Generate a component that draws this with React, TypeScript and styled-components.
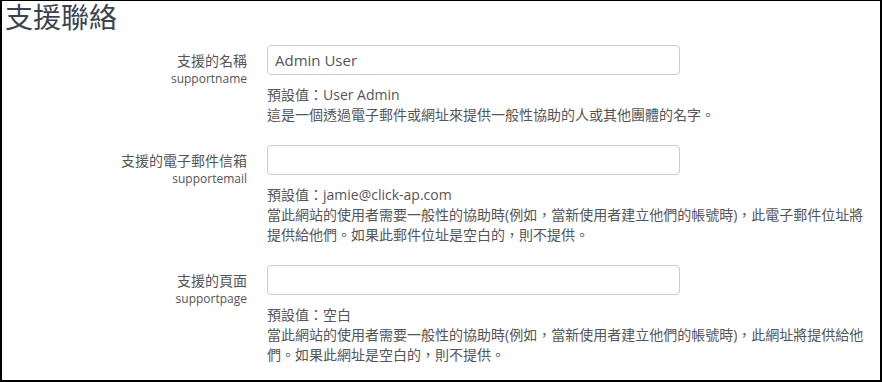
import styled, { createGlobalStyle } from "styled-components";

interface IField {
  label: string;
  name: string;
  value: string;
  defaultValue: string;
  description: string;
}

const fields: IField[] = [
  {
    label: "支援的名稱",
    name: "supportname",
    value: "Admin User",
    defaultValue: "User Admin",
    description: "這是一個透過電子郵件或網址來提供一般性協助的人或其他團體的名字。",
  },
  {
    label: "支援的電子郵件信箱",
    name: "supportemail",
    value: "",
    defaultValue: "jamie@click-ap.com",
    description:
      "當此網站的使用者需要一般性的協助時(例如，當新使用者建立他們的帳號時)，此電子郵件位址將提供給他們。如果此郵件位址是空白的，則不提供。",
  },
  {
    label: "支援的頁面",
    name: "supportpage",
    value: "",
    defaultValue: "空白",
    description:
      "當此網站的使用者需要一般性的協助時(例如，當新使用者建立他們的帳號時)，此網址將提供給他們。如果此網址是空白的，則不提供。",
  },
];

const App = () => {
  return (
    <>
      <GlobalStyle />
      <Frame>
        <Title>支援聯絡</Title>
        <FieldList>
          {fields.map((field) => (
            <FieldRow key={field.name}>
              <Label htmlFor={field.name}>
                {field.label}
                <SettingName>{field.name}</SettingName>
              </Label>
              <Control>
                <TextInput id={field.name} type="text" defaultValue={field.value} />
                <Help>
                  <div>預設值：{field.defaultValue}</div>
                  <div>{field.description}</div>
                </Help>
              </Control>
            </FieldRow>
          ))}
        </FieldList>
      </Frame>
    </>
  );
};

export default App;

const GlobalStyle = createGlobalStyle`
  html, body {
    margin: 0;
    padding: 0;
    background: #ffffff;
  }
  body {
    font-family: "Open Sans", "Noto Sans CJK TC", sans-serif;
    color: #555555;
  }
`;

const Frame = styled.div`
  box-sizing: border-box;
  width: 882px;
  height: 382px;
  border: 2px solid #000000;
  border-top-width: 1px;
  overflow: hidden;
  background: #ffffff;
`;

const Title = styled.h2`
  margin: 0;
  padding: 0 0 0 3px;
  height: 44px;
  line-height: 36px;
  font-family: "Liberation Serif", "Noto Sans CJK TC", serif;
  font-size: 28px;
  font-weight: 400;
  color: #3a4350;
`;

const FieldList = styled.div`
  display: flex;
  flex-direction: column;
  gap: 20px;
`;

const FieldRow = styled.div`
  display: grid;
  grid-template-columns: 245px 1fr;
  column-gap: 20px;
`;

const Label = styled.label`
  display: flex;
  flex-direction: column;
  align-items: flex-end;
  padding-top: 7px;
  font-size: 14px;
  line-height: 18px;
  color: #555555;
  text-align: right;
`;

const SettingName = styled.span`
  font-size: 12px;
`;

const Control = styled.div`
  display: flex;
  flex-direction: column;
`;

const TextInput = styled.input`
  box-sizing: border-box;
  width: 413px;
  height: 30px;
  margin: 0;
  padding: 4px 7px;
  border: 1px solid #cccccc;
  border-radius: 4px;
  font-family: "Open Sans", "Noto Sans CJK TC", sans-serif;
  font-size: 15px;
  color: #555555;
  outline: none;
`;

const Help = styled.div`
  margin-top: 10px;
  font-size: 14px;
  line-height: 20px;
  color: #555555;
  max-width: 605px;
`;
